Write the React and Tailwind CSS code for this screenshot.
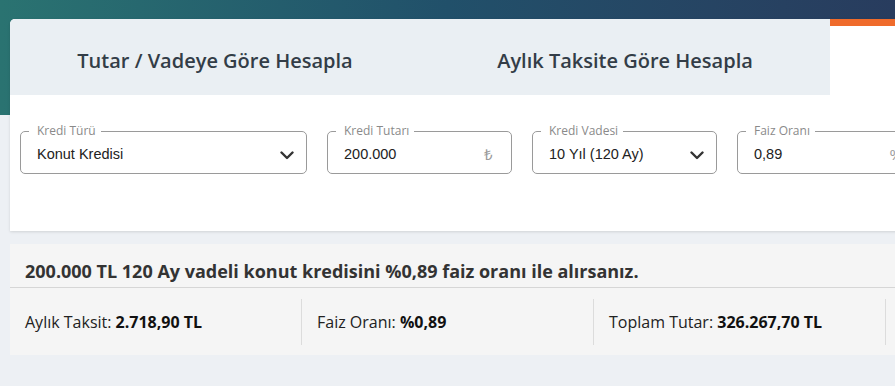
import { useState } from 'react';

const tabs = ['Tutar / Vadeye Göre Hesapla', 'Aylık Taksite Göre Hesapla'];

const fields = [
  { label: 'Kredi Türü', value: 'Konut Kredisi', width: 'w-[287px]', kind: 'select' },
  { label: 'Kredi Tutarı', value: '200.000', width: 'w-[185px]', kind: 'lira' },
  { label: 'Kredi Vadesi', value: '10 Yıl (120 Ay)', width: 'w-[185px]', kind: 'select' },
  { label: 'Faiz Oranı', value: '0,89', width: 'w-[185px]', kind: 'percent' },
];

const results = [
  { label: 'Aylık Taksit:', value: '2.718,90 TL' },
  { label: 'Faiz Oranı:', value: '%0,89' },
  { label: 'Toplam Tutar:', value: '326.267,70 TL' },
];

const Chevron = () => (
  <svg width="14" height="9" viewBox="0 0 14 9" fill="none">
    <path d="M1.5 1.5 7 7l5.5-5.5" stroke="#333" strokeWidth="2.4" strokeLinecap="round" strokeLinejoin="round" />
  </svg>
);

const Field = ({ field }) => (
  <fieldset className={`${field.width} h-[50px] shrink-0 rounded-[5px] border border-[#9a9a9a] px-[8px] -mt-[7px]`}>
    <legend className="pl-[8px] pr-[5px] text-[12px] leading-[14px] text-[#8a8a8a]" style={{ fontFamily: '"Open Sans", sans-serif' }}>
      {field.label}
    </legend>
    <div className="flex h-[30px] items-center justify-between pl-[8px] pr-[4px] pt-[4px]">
      <span className="text-[14.5px] text-[#222]">{field.value}</span>
      {field.kind === 'select' && <Chevron />}
      {field.kind === 'lira' && <span className="pr-[6px] text-[15px] text-[#9a9a9a]">₺</span>}
      {field.kind === 'percent' && <span className="pr-[6px] text-[15px] text-[#9a9a9a]">%</span>}
    </div>
  </fieldset>
);

export default function App() {
  const [active] = useState(2);

  return (
    <div className="relative h-[386px] w-[895px] overflow-hidden bg-[#edf0f4]" style={{ fontFamily: '"Open Sans", sans-serif' }}>
      <div className="h-[115px] bg-gradient-to-r from-[#2a7371] via-[#21506a] to-[#283c5e]" />

      <div className="-mt-[96px] ml-[10px] w-[1100px]">
        <div className="overflow-hidden rounded-tl-[5px] bg-white shadow-[0_1px_3px_rgba(0,0,0,0.12)]">
          <div className="flex h-[76px]">
            {tabs.map((t, i) => (
              <div key={t} className={`flex w-[410px] items-center justify-center bg-[#eaeff3] pt-[8px] text-[20px] font-semibold text-[#333d47] ${active === i ? 'border-t-[7px] border-[#ef6b2b] bg-white' : ''}`}>
                {t}
              </div>
            ))}
            <div className="flex-1 border-t-[7px] border-[#ef6b2b] bg-white" />
          </div>

          <div className="flex h-[136px] gap-[20px] px-[10px] pt-[36px]" style={{ fontFamily: '"Liberation Sans", Arial, sans-serif' }}>
            {fields.map((f) => (
              <Field key={f.label} field={f} />
            ))}
          </div>
        </div>

        <div className="mt-[13px] h-[111px] bg-[#f5f5f5]">
          <div className="h-[44px] border-b border-[#d6d6d6] pl-[15px] pt-[16px] text-[18px] leading-[22px] font-bold text-[#333]">
            200.000 TL 120 Ay vadeli konut kredisini %0,89 faiz oranı ile alırsanız.
          </div>
          <div className="flex pt-[11px]">
            {results.map((r) => (
              <div key={r.label} className="flex h-[46px] w-[292px] items-center border-r border-[#dcdcdc] pl-[15px] text-[16px] text-[#222]">
                {r.label}&nbsp;<b className="font-bold text-[#111]">{r.value}</b>
              </div>
            ))}
          </div>
        </div>
      </div>
    </div>
  );
}
